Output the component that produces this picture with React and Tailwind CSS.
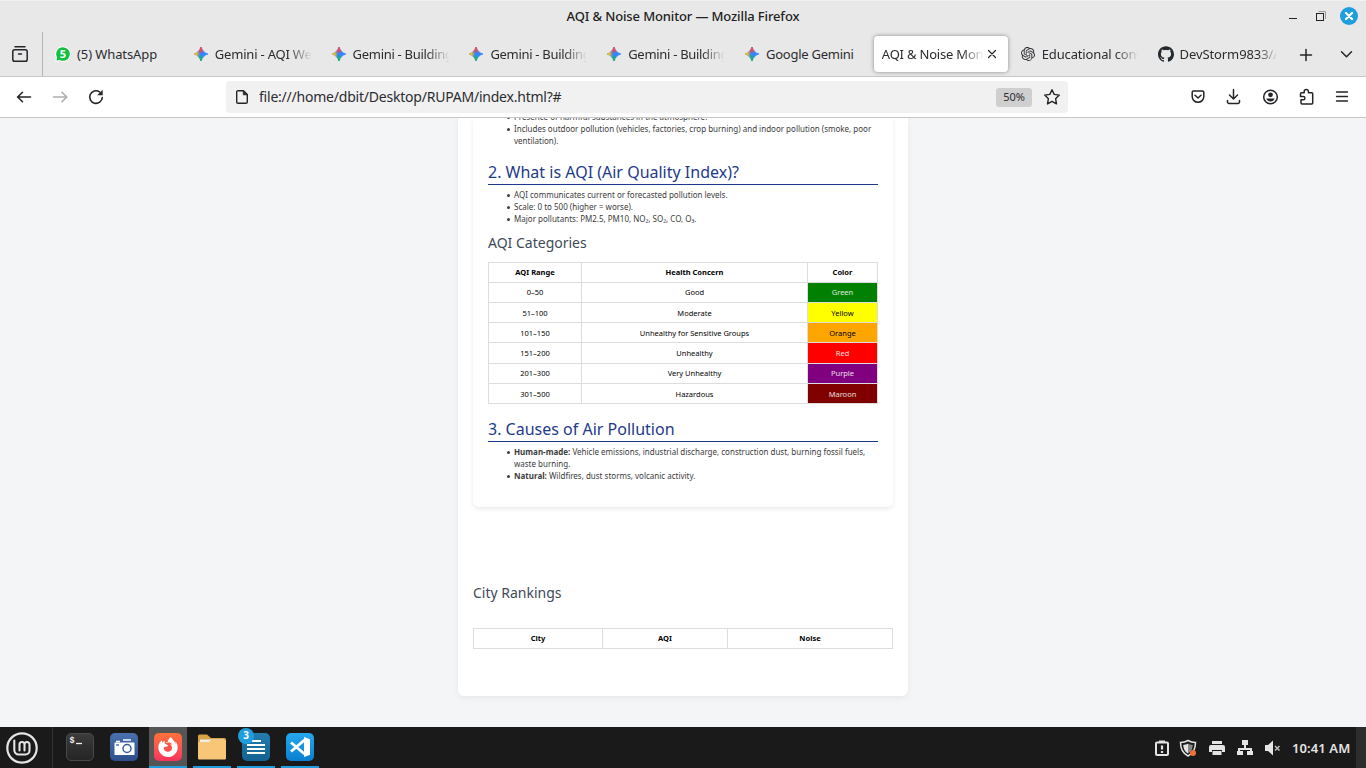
import React from "react";
import { SiOpenai, SiGithub, SiFirefoxbrowser } from "react-icons/si";

const GeminiIcon = ({ id }) => (
  <svg className="h-[14px] w-[14px] shrink-0" viewBox="0 0 14 14">
    <defs>
      <radialGradient id={id + "r"} cx="6" cy="0.5" r="6.5" gradientUnits="userSpaceOnUse">
        <stop offset="0.4" stopColor="#ea4a52" />
        <stop offset="1" stopColor="#ea4a52" stopOpacity="0" />
      </radialGradient>
      <radialGradient id={id + "g"} cx="6.5" cy="14" r="6.5" gradientUnits="userSpaceOnUse">
        <stop offset="0.3" stopColor="#1fb25a" />
        <stop offset="1" stopColor="#1fb25a" stopOpacity="0" />
      </radialGradient>
      <radialGradient id={id + "y"} cx="0" cy="7" r="6" gradientUnits="userSpaceOnUse">
        <stop offset="0.4" stopColor="#f5c21b" />
        <stop offset="1" stopColor="#f5c21b" stopOpacity="0" />
      </radialGradient>
      <path id={id} d="M7 0C8 3.500 10.500 6 14 7 10.500 8 8 10.500 7 14 6 10.500 3.500 8 0 7 3.500 6 6 3.500 7 0Z" />
    </defs>
    <g strokeWidth="0.700" strokeLinejoin="round">
      <use href={`#${id}`} fill="#3186ff" stroke="#3186ff" />
      <use href={`#${id}`} fill={`url(#${id}r)`} stroke={`url(#${id}r)`} />
      <use href={`#${id}`} fill={`url(#${id}g)`} stroke={`url(#${id}g)`} />
      <use href={`#${id}`} fill={`url(#${id}y)`} stroke={`url(#${id}y)`} />
    </g>
  </svg>
);

const WhatsAppIcon = () => (
  <svg className="-ml-[1px] h-[16px] w-[16px] shrink-0" viewBox="0 0 16 16">
    <path d="M8 0.300A7.700 7.700 0 1 1 4.800 15L0.300 15.700 1 11.500A7.700 7.700 0 0 1 8 0.300Z" fill="#fff" />
    <path d="M8 1.200A6.800 6.800 0 1 1 4.800 14L1.500 14.400 2 11.200A6.800 6.800 0 0 1 8 1.200Z" fill="#12c143" />
    <text x="8" y="12" textAnchor="middle" fontSize="11" fontWeight="700" fill="#fff" fontFamily="Open Sans">5</text>
  </svg>
);

const Tab = ({ icon, label, spacing, clip }) => (
  <div className="flex h-full w-[137.8px] shrink-0 items-center pl-[11px]">
    {icon}
    <span
      className={`ml-[7px] mt-[1px] overflow-hidden whitespace-nowrap text-[13px] ${spacing} ${
        clip ? "w-[96px] [mask-image:linear-gradient(to_right,black_73px,transparent_97px)]" : ""
      }`}
    >
      {label}
    </span>
  </div>
);

const line = {
  fill: "none",
  stroke: "#252529",
  strokeWidth: 1.5,
  strokeLinecap: "round",
  strokeLinejoin: "round",
};

const Chrome = () => (
  <header className="shrink-0 bg-[#e8e8e8] text-[#2c2c30]">
    <div className="grid h-8 grid-cols-[1fr_auto_1fr] items-center border-t border-[#f0f0f0]">
      <span />
      <span className="whitespace-nowrap text-[13px] font-medium tracking-[-0.13px] text-[#222]">
        AQI &amp; Noise Monitor — Mozilla Firefox
      </span>
      <div className="flex items-center justify-end pr-2">
        <svg className="-mt-px h-[18px] w-[70px]" viewBox="0 0 70 18">
          <path d="M1 11.500H9" stroke="#222" />
          <path d="M30.500 4.500H37.500V12" stroke="#999" fill="none" />
          <rect x="28.500" y="6.500" width="7" height="7" stroke="#222" fill="none" />
          <circle cx="61" cy="9" r="9" fill="#1f9ede" />
          <path d="M58 6l6 6M64 6l-6 6" stroke="#fff" strokeWidth="2.200" strokeLinecap="round" />
        </svg>
      </div>
    </div>
    <div className="flex h-[45px] border-b border-[#c6c6c6]">
      <div className="flex w-[43px] shrink-0 items-center justify-center border-r border-[#b4b4b4] pr-[2px]">
        <svg className="h-[18px] w-[18px]" viewBox="0 0 18 18" {...line}>
          <path d="M4 1.800H14" />
          <rect x="1.800" y="4.800" width="14.400" height="11.500" rx="1.800" />
          <path d="M7.500 9h3" />
        </svg>
      </div>
      <div className="flex flex-1 pl-[2px]">
        <Tab icon={<WhatsAppIcon />} label="(5) WhatsApp" spacing="tracking-[-0.1px] -translate-x-[1px]" />
        <Tab icon={<GeminiIcon id="ga" />} label="Gemini - AQI Website" spacing="tracking-[-0.2px]" clip />
        <Tab icon={<GeminiIcon id="gb" />} label="Gemini - Building" spacing="tracking-[-0.3px]" clip />
        <Tab icon={<GeminiIcon id="gc" />} label="Gemini - Building" spacing="tracking-[-0.3px]" clip />
        <Tab icon={<GeminiIcon id="gd" />} label="Gemini - Building" spacing="tracking-[-0.3px]" clip />
        <Tab icon={<GeminiIcon id="ge" />} label="Google Gemini" spacing="tracking-[-0.25px]" />
        <div className="flex w-[138px] shrink-0 items-center pl-[2px]">
          <div className="flex h-[36px] w-[134px] items-center rounded bg-white pl-[8px] shadow-[0_0_4px_rgba(0,0,0,0.4)]">
            <span className="mt-[1px] w-[101px] overflow-hidden whitespace-nowrap text-[13px] tracking-[-0.2px] [mask-image:linear-gradient(to_right,black_80px,transparent_102px)]">
              AQI &amp; Noise Monitor
            </span>
            <svg className="ml-[2px] h-[14px] w-[14px]" viewBox="0 0 14 14" {...line} strokeWidth="1.200">
              <path d="M3.500 3.500l7 7M10.500 3.500l-7 7" />
            </svg>
          </div>
        </div>
        <Tab icon={<SiOpenai className="h-[14px] w-[14px] shrink-0" />} label="Educational content" spacing="tracking-[-0.15px]" clip />
        <div className="flex h-full w-[130px] shrink-0 items-center pl-[10px]">
          <SiGithub className="h-4 w-4 shrink-0 text-[#24292f]" />
          <span className="ml-[6px] mt-[1px] w-[96px] overflow-hidden whitespace-nowrap text-[13px] tracking-[-0.1px] [mask-image:linear-gradient(to_right,black_78px,transparent_98px)]">
            DevStorm9833/AQI
          </span>
        </div>
        <svg className="ml-[20px] mt-[15px] h-[16px] w-[60px] shrink-0" viewBox="0 0 60 16" {...line}>
          <path d="M2.500 8H13.500M8 2.500V13.500" />
          <path d="M43.500 4.800l5 5 5-5" />
        </svg>
      </div>
    </div>
    <div className="flex h-[41px] items-center border-b border-[#c6c6c6] bg-white pl-4">
      <svg className="h-[18px] w-[90px]" viewBox="0 0 90 18" {...line} strokeWidth="1.600">
        <path d="M14.500 9H1.500M6.500 4.300L1.700 9l4.800 4.700" />
        <path d="M37.500 9h13M46 4.300L50.800 9 46 13.700" stroke="#adadad" />
        <path d="M83.500 3.800A6.300 6.300 0 1 0 86.300 9.500" />
        <path d="M86.700 1.800v5.500h-5.500z" fill="#252529" stroke="none" />
      </svg>
      <div className="ml-[120px] flex h-8 w-[842px] items-center rounded bg-[#f1f1f1] pl-[8px]">
        <svg className="h-4 w-4" viewBox="0 0 16 16" {...line} strokeWidth="1.400">
          <path d="M4 1.700h5.500L13.300 5.500V13a1.300 1.300 0 0 1-1.300 1.300H4A1.300 1.300 0 0 1 2.700 13V3A1.300 1.300 0 0 1 4 1.700Z" />
          <path d="M9.300 2v3.800h3.800z" fill="#252529" strokeWidth="0.800" />
        </svg>
        <span className="-mt-[2px] ml-[9px] w-[737px] whitespace-nowrap text-[14px] tracking-[-0.22px]">
          file:///home/dbit/Desktop/RUPAM/index.html?#
        </span>
        <span className="flex h-[19px] w-[36px] shrink-0 items-center justify-center rounded-[3px] bg-[#cfcfcf] text-[11px]">
          50%
        </span>
        <svg className="ml-[11px] h-[18px] w-[18px] shrink-0" viewBox="0 0 18 18" {...line} strokeWidth="1.400">
          <path d="M9 1.700l2.200 4.700 5.100.7-3.700 3.600.9 5.200L9 13.400l-4.500 2.500.9-5.200L1.700 7.100l5.100-.7z" />
        </svg>
      </div>
      <svg className="ml-[122px] h-[18px] w-[162px] shrink-0" viewBox="0 0 162 18" {...line}>
        <path d="M3.500 3h9a1.300 1.300 0 0 1 1.300 1.300V8.500a5.800 5.800 0 0 1-11.600 0V4.300A1.300 1.300 0 0 1 3.500 3Z" />
        <path d="M5 7.200l3 2.800 3-2.800" />
        <path d="M43.500 1.500V10.500M39.500 7l4 4 4-4M37.500 12.500v1.500a1.500 1.500 0 0 0 1.500 1.500h9a1.500 1.500 0 0 0 1.500-1.500v-1.500" />
        <circle cx="80.500" cy="9" r="6.800" />
        <circle cx="80.500" cy="6.800" r="2.400" fill="#252529" stroke="none" />
        <path d="M76.300 10.500h8.400a4.500 4.500 0 0 1-8.400 0Z" fill="#252529" stroke="none" />
        <path d="M111.500 4.800h2.700V3.500a2.100 2.100 0 0 1 4.200 0v1.300h3.300a1 1 0 0 1 1 1V15a1 1 0 0 1-1 1h-9.700a1 1 0 0 1-1-1v-3.200h2.300a1.600 1.600 0 0 0 0-3.200h-2.800V5.800a1 1 0 0 1 1-1Z" />
        <path d="M146.500 4h11M146.500 8.500h11M146.500 13h11" strokeWidth="1.300" />
      </svg>
    </div>
  </header>
);

const List = ({ children, className = "" }) => (
  <ul className={`pl-[26px] text-[8px] leading-[12px] text-[#3c3c3c] ${className}`}>{children}</ul>
);

const Item = ({ children }) => (
  <li className="relative before:absolute before:-left-[7px] before:top-[5px] before:h-[3px] before:w-[3px] before:rounded-full before:bg-[#3c3c3c]">
    {children}
  </li>
);

const Heading = ({ children, className = "" }) => (
  <h2 className={`flex h-[25px] items-center border-b border-[#1e3a8a] text-[16px] leading-6 text-[#1e3a8a] ${className}`}>
    {children}
  </h2>
);

const cell = "flex items-center justify-center border-b border-r border-[#ddd]";

const rows = [
  ["0–50", "Good", "Green", "bg-[#008000] text-white/85", "h-[20px]", "pb-[2px]"],
  ["51–100", "Moderate", "Yellow", "bg-[#ffff00]", "h-[20px]", ""],
  ["101–150", "Unhealthy for Sensitive Groups", "Orange", "bg-[#ffa500]", "h-[20px]", ""],
  ["151–200", "Unhealthy", "Red", "bg-[#ff0000] text-white/85", "h-[21px]", "pb-[1px]"],
  ["201–300", "Very Unhealthy", "Purple", "bg-[#800080] text-white/85", "h-[20px]", "pb-[2px]"],
  ["301–500", "Hazardous", "Maroon", "bg-[#800000] text-white/85", "h-[20px]", ""],
];

const Page = () => (
  <main className="flex min-h-0 flex-1 justify-center overflow-hidden bg-[#f3f5f7]">
    <div className="h-[578px] w-[450px] rounded-b-[6px] bg-white px-[15px] shadow-[0_2px_6px_rgba(0,0,0,0.06)]">
      <section className="h-[389px] rounded-b-[6px] bg-white px-[15px] shadow-[0_2px_5px_rgba(0,0,0,0.08)]">
        <div className="h-[29px] overflow-hidden">
          <List className="-mt-[7px]">
            <Item>Presence of harmful substances in the atmosphere.</Item>
            <Item>
              Includes outdoor pollution (vehicles, factories, crop burning) and indoor pollution (smoke, poor
              ventilation).
            </Item>
          </List>
        </div>
        <Heading className="mt-[13px]">2. What is AQI (Air Quality Index)?</Heading>
        <List className="mt-[4px]">
          <Item>AQI communicates current or forecasted pollution levels.</Item>
          <Item>Scale: 0 to 500 (higher = worse).</Item>
          <Item>Major pollutants: PM2.5, PM10, NO₂, SO₂, CO, O₃.</Item>
        </List>
        <h3 className="mt-[8px] text-[14px] leading-5 text-[#414a58]">AQI Categories</h3>
        <div className="mt-[9px] border-l border-t border-[#ddd] text-[7.5px] leading-[10px] text-black">
          <div className="grid h-[20px] grid-cols-[93px_226px_70px] font-bold">
            <span className={`${cell} pb-[2px]`}>AQI Range</span>
            <span className={`${cell} pb-[2px]`}>Health Concern</span>
            <span className={`${cell} pb-[2px]`}>Color</span>
          </div>
          {rows.map(([range, concern, name, tone, height, pad]) => (
            <div key={range} className={`grid grid-cols-[93px_226px_70px] ${height}`}>
              <span className={`${cell} ${pad}`}>{range}</span>
              <span className={`${cell} ${pad}`}>{concern}</span>
              <span className={`${cell} ${pad} ${tone}`}>{name}</span>
            </div>
          ))}
        </div>
        <Heading className="mt-[13px]">3. Causes of Air Pollution</Heading>
        <List className="mt-[4px]">
          <Item>
            <b>Human-made:</b> Vehicle emissions, industrial discharge, construction dust, burning fossil fuels, waste
            burning.
          </Item>
          <Item>
            <b>Natural:</b> Wildfires, dust storms, volcanic activity.
          </Item>
        </List>
      </section>
      <h3 className="mt-[76px] text-[14px] leading-5 text-[#414a58]">City Rankings</h3>
      <div className="mt-[25px] grid h-[21px] grid-cols-[129px_125px_165px] border-l border-t border-[#ddd] text-[7.5px] font-bold text-black">
        <span className={cell}>City</span>
        <span className={cell}>AQI</span>
        <span className={cell}>Noise</span>
      </div>
    </div>
  </main>
);

const Slot = ({ children, open, active }) => (
  <div
    className={`flex h-[41px] w-[38px] items-center justify-center border-b-2 ${
      open ? "border-[#1f9ede]" : "border-transparent"
    } ${active ? "bg-[#555]" : ""}`}
  >
    {children}
  </div>
);

const Tile = ({ children, className }) => (
  <div className={`relative flex h-7 w-7 items-center justify-center rounded-[5px] ${className}`}>{children}</div>
);

const Taskbar = () => (
  <footer className="flex h-[41px] shrink-0 bg-[#1a1a1a]">
    <div className="flex w-[53px] items-center border-r border-[#333] pl-[6px] pt-[1px]">
      <svg className="h-8 w-8" viewBox="0 0 32 32" fill="none" stroke="#e4e4e4">
        <circle cx="16" cy="16" r="14.700" strokeWidth="2.200" />
        <path d="M8.300 8.500v9.500a4.500 4.500 0 0 0 4.500 4.500h6.700a4 4 0 0 0 4-4v-6a2.500 2.500 0 0 0-5 0v6M18.500 12.500a2.500 2.500 0 0 0-5 0v6" strokeWidth="2.100" strokeLinecap="round" />
      </svg>
    </div>
    <div className="flex gap-[6px] pl-[8px]">
      <Slot>
        <Tile className="border border-[#4a4a4a] bg-linear-to-b from-[#3b3b3b] to-[#252525]">
          <svg className="h-full w-full" viewBox="0 0 26 26">
            <text x="2.500" y="9" fontSize="8.500" fontWeight="700" fill="#eee" fontFamily="Liberation Mono">$</text>
            <path d="M9 9.500h6" stroke="#eee" strokeWidth="1.300" />
          </svg>
        </Tile>
      </Slot>
      <Slot>
        <Tile className="bg-linear-to-b from-[#4b70af] to-[#2c4e8c]">
          <svg className="h-7 w-7" viewBox="0 0 28 28">
            <path d="M5 9.500h19a.5.500 0 0 1 .5.500v11.500a.5.500 0 0 1-.5.500H5a.5.500 0 0 1-.5-.500V10a.5.500 0 0 1 .5-.500Z" fill="#fff" />
            <path d="M13 7h8M6 8.500h4" stroke="#fff" strokeWidth="1.600" />
            <circle cx="17" cy="15.500" r="4" fill="none" stroke="#395d9b" strokeWidth="1.500" />
            <path d="M6 12h3" stroke="#395d9b" strokeWidth="1.300" />
          </svg>
        </Tile>
      </Slot>
      <Slot open active>
        <Tile className="bg-linear-to-b from-[#ff7139] to-[#f6325d]">
          <SiFirefoxbrowser className="h-5 w-5 text-white" />
        </Tile>
      </Slot>
      <Slot open>
        <svg className="h-7 w-7" viewBox="0 0 28 28">
          <path d="M0 3a1.500 1.500 0 0 1 1.500-1.500h7.500L13 5h13.500A1.500 1.500 0 0 1 28 6.500V24H0Z" fill="#d9a244" />
          <path d="M2 6.500h24v5H2z" fill="#eee" />
          <path d="M0 9h11l2-2h15v18.500a1 1 0 0 1-1 1H1a1 1 0 0 1-1-1Z" fill="#f8c677" />
        </svg>
      </Slot>
      <Slot open>
        <Tile className="bg-linear-to-b from-[#247daf] to-[#126292]">
          <svg className="h-7 w-7" viewBox="0 0 28 28">
            <path d="M10 8h9M5 12h18M5 16h18M5 20h18" stroke="#fff" strokeWidth="2" />
          </svg>
          <span className="absolute -left-[4px] -top-[5px] flex h-4 w-4 items-center justify-center rounded-full bg-[#1f9ede] text-[10px] font-bold text-white">
            3
          </span>
        </Tile>
      </Slot>
      <Slot open>
        <Tile className="bg-linear-to-b from-[#26a8ee] to-[#087fd0]">
          <svg className="h-7 w-7" viewBox="0 0 28 28" fill="none" stroke="#fff">
            <path d="M18.500 7L5 18.500M5 9.500L18.500 21" strokeWidth="2.800" />
            <path d="M18 4l6 2.300v15.400L18 24Z" fill="#fff" stroke="none" />
          </svg>
        </Tile>
      </Slot>
    </div>
    <div className="ml-auto flex items-center">
      <svg className="mt-[1px] h-[18px] w-[128px]" viewBox="0 0 128 18">
        <g fill="none" stroke="#e4e4e4" strokeWidth="2">
          <rect x="2" y="3.500" width="12" height="12.500" rx="1" />
          <path d="M5 2.500h6M8 6.500v4M8 12v2" strokeWidth="2.200" />
        </g>
        <path d="M34 1.500c2.500 1.500 5 2 7.500 2 0 6-1.500 10.500-7.500 13.500-6-3-7.500-7.500-7.500-13.500 2.500 0 5-.5 7.500-2Z" fill="#1a1a1a" stroke="#e4e4e4" strokeWidth="1.500" />
        <path d="M34 4.500c1.500 1 3 1.300 4.800 1.500-.3 4-1.500 6.500-4.800 8.500Z" fill="#8a8a8a" />
        <path d="M34 4.500c-1.500 1-3 1.300-4.800 1.500.3 4 1.500 6.500 4.800 8.500Z" fill="#e4e4e4" />
        <circle cx="39" cy="14" r="3" fill="#f0703a" />
        <path d="M58 2h10v3H58zM57 6h12a2 2 0 0 1 2 2v5h-3v-2H58v2h-3V8a2 2 0 0 1 2-2ZM58.500 12h9v4h-9z" fill="#e4e4e4" />
        <path d="M88 1h6v5h-2v3h6v3h1v4h-6v-4h3v-1H86v1h3v4h-6v-4h1V9h6V6h-2z" fill="#e4e4e4" />
        <path d="M111 6h3l5-4.500v15L114 12h-3z" fill="#e4e4e4" />
        <path d="M121 7l4.500 4.500M125.500 7L121 11.500" stroke="#bdbdbd" strokeWidth="1.500" />
      </svg>
      <span className="ml-[10px] mt-[2px] w-[64px] whitespace-nowrap text-[13px] font-semibold tracking-[0.1px] text-[#e4e4e4]">10:41 AM</span>
      <span className="h-full w-[10px] bg-[#2d2d2d]" />
    </div>
  </footer>
);

export default function App() {
  return (
    <div className="flex h-[768px] w-[1366px] flex-col overflow-hidden font-['Noto_Sans',sans-serif]">
      <Chrome />
      <Page />
      <Taskbar />
    </div>
  );
}
